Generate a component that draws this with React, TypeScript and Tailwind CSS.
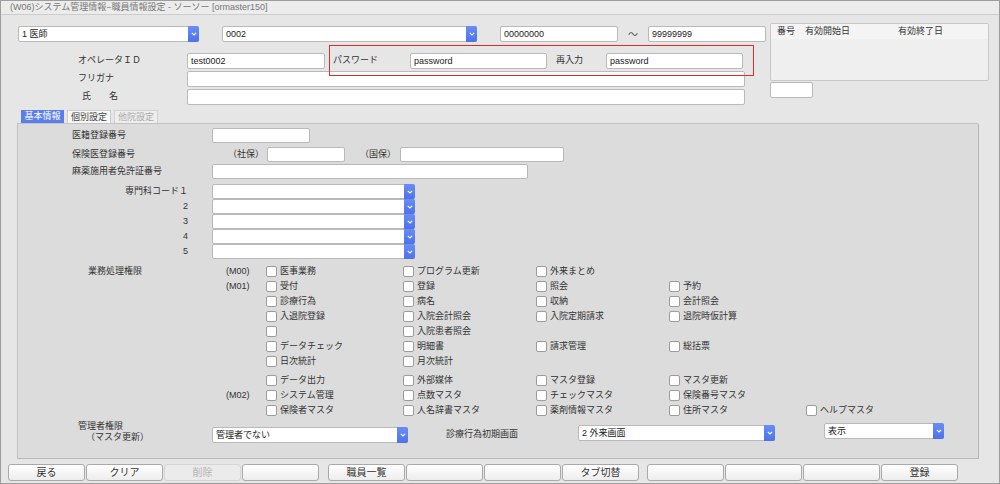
import React from 'react';

// 職員情報設定 screen (ORCA style form)

const Chevron = () => (
  <svg width="6" height="4" viewBox="0 0 6 4" fill="none">
    <path d="M0.8 0.8 L3 3 L5.2 0.8" stroke="white" strokeWidth="1.1" />
  </svg>
);

function Input({ w, value = '', h = 'h-[16px]' }: { w: string; value?: string; h?: string }) {
  return (
    <div className={`${w} ${h} shrink-0 bg-white border border-[#b9b9b9] rounded-[2px] pl-[3px] text-[9px] leading-[14px] text-[#222] overflow-hidden whitespace-nowrap`}>
      {value}
    </div>
  );
}

function Select({ w, value = '', h = 'h-[16px]' }: { w: string; value?: string; h?: string }) {
  return (
    <div className={`${w} ${h} shrink-0 flex bg-white border border-[#b9b9b9] rounded-[2px]`}>
      <div className="flex-1 pl-[3px] text-[9px] leading-[14px] text-[#222] whitespace-nowrap overflow-hidden">{value}</div>
      <div className="w-[11px] -my-[1px] -mr-[1px] bg-gradient-to-b from-[#6a8cf5] to-[#4d72ea] rounded-r-[2px] flex items-center justify-center">
        <Chevron />
      </div>
    </div>
  );
}

function Check({ label }: { label: string }) {
  return (
    <div className="flex items-center">
      <div className="w-[11px] h-[11px] bg-white border border-[#9c9c9c] rounded-[2px]" />
      <span className="ml-[3px] text-[9px] text-[#333] whitespace-nowrap">{label}</span>
    </div>
  );
}

type PermRow = { m?: string; title?: string; items: (string | null)[]; gapTop?: boolean };

const permRows: PermRow[] = [
  { m: '(M00)', title: '業務処理権限', items: ['医事業務', 'プログラム更新', '外来まとめ'] },
  { m: '(M01)', items: ['受付', '登録', '照会', '予約'] },
  { items: ['診療行為', '病名', '収納', '会計照会'] },
  { items: ['入退院登録', '入院会計照会', '入院定期請求', '退院時仮計算'] },
  { items: ['', '入院患者照会'] },
  { items: ['データチェック', '明細書', '請求管理', '総括票'] },
  { items: ['日次統計', '月次統計'] },
  { items: ['データ出力', '外部媒体', 'マスタ登録', 'マスタ更新'], gapTop: true },
  { m: '(M02)', items: ['システム管理', '点数マスタ', 'チェックマスタ', '保険番号マスタ'] },
  { items: ['保険者マスタ', '人名辞書マスタ', '薬剤情報マスタ', '住所マスタ', 'ヘルプマスタ'] },
];

const colWidths = ['w-[137px]', 'w-[133px]', 'w-[133px]', 'w-[137px]', 'w-[120px]'];

const buttonGroups = [
  ['戻る', 'クリア', '削除', ''],
  ['職員一覧', '', '', 'タブ切替'],
  ['', '', '', '登録'],
];

export default function App() {
  return (
    <div className="relative w-[1000px] h-[484px] bg-[#e6e6e6] border border-[#9d9d9d] font-['Liberation_Sans','Noto_Sans_CJK_JP',sans-serif] text-[#333] overflow-hidden flex flex-col">
      {/* title bar */}
      <div className="h-[14px] shrink-0 bg-[#ececec] border-b border-[#cdcdcd] pl-[9px] text-[9px] leading-[13px] text-[#777]">
        (W06)システム管理情報−職員情報設定 - ソーソー [ormaster150]
      </div>

      {/* header area */}
      <div className="flex">
        <div className="w-[766px] shrink-0">
          <div className="mt-[11px] flex items-center">
            <div className="ml-[17px]"><Select w="w-[181px]" value="1 医師" /></div>
            <div className="ml-[23px]"><Select w="w-[255px]" value="0002" /></div>
            <div className="ml-[23px]"><Input w="w-[118px]" value="00000000" /></div>
            <div className="w-[30px] text-center text-[10px] text-[#555]">〜</div>
            <Input w="w-[118px]" value="99999999" />
          </div>
          <div className="mt-[11px] flex items-center">
            <div className="ml-[77px] w-[109px] text-[9px]">オペレータＩＤ</div>
            <Input w="w-[138px]" value="test0002" />
            <div className="ml-[8px] w-[77px] text-[9px]">パスワード</div>
            <Input w="w-[137px]" value="password" />
            <div className="ml-[9px] w-[50px] text-[9px]">再入力</div>
            <Input w="w-[137px]" value="password" />
          </div>
          <div className="mt-[2px] flex items-center">
            <div className="ml-[77px] w-[109px] text-[9px]">フリガナ</div>
            <Input w="w-[558px]" />
          </div>
          <div className="mt-[2px] flex items-center">
            <div className="ml-[81px] w-[105px] text-[9px]">氏　　名</div>
            <Input w="w-[558px]" />
          </div>
        </div>
        <div className="ml-[3px]">
          <div className="mt-[8px] w-[219px] h-[58px] bg-[#efefef] border border-[#c8c8c8] rounded-[2px]">
            <div className="flex h-[15px] items-center text-[9px] bg-[#f4f4f4]">
              <div className="w-[34px] pl-[6px]">番号</div>
              <div className="w-[48px]">有効開始日</div>
              <div className="flex-1 text-center">有効終了日</div>
            </div>
          </div>
          <div className="mt-[1px]"><Input w="w-[43px]" /></div>
        </div>
      </div>

      {/* tabs */}
      <div className="mt-[5px] ml-[20px] flex gap-[3px] h-[13px]">
        <div className="w-[43px] bg-[#5a7fe8] text-white text-[9px] leading-[13px] text-center">基本情報</div>
        <div className="w-[44px] bg-[#f7f7f7] border border-b-0 border-[#cccccc] text-[9px] leading-[12px] text-center text-[#444]">個別設定</div>
        <div className="w-[44px] bg-[#eeeeee] border border-b-0 border-[#d2d2d2] text-[9px] leading-[12px] text-center text-[#aaaaaa]">他院設定</div>
      </div>

      {/* main panel */}
      <div className="ml-[16px] w-[962px] h-[336px] shrink-0 bg-[#dcdcdc] border border-[#c2c2c2] border-r-[#b5b5b5] border-b-[#b9b9b9] rounded-tr-[2px]">
        <div className="mt-[4px] flex items-center">
          <div className="ml-[54px] w-[140px] text-[9px]">医籍登録番号</div>
          <Input w="w-[98px]" h="h-[15px]" />
        </div>
        <div className="mt-[4px] flex items-center">
          <div className="ml-[54px] w-[156px] text-[9px]">保険医登録番号</div>
          <div className="w-[39px] text-[9px]">（社保）</div>
          <Input w="w-[78px]" h="h-[15px]" />
          <div className="ml-[15px] w-[40px] text-[9px]">（国保）</div>
          <Input w="w-[164px]" h="h-[15px]" />
        </div>
        <div className="mt-[2px] flex items-center">
          <div className="ml-[54px] w-[140px] text-[9px]">麻薬施用者免許証番号</div>
          <Input w="w-[316px]" h="h-[15px]" />
        </div>
        <div className="mt-[5px] flex">
          <div className="ml-[54px] w-[140px] pr-[24px] text-[9px] text-right">
            {['専門科コード１', '2', '3', '4', '5'].map((t) => (
              <div key={t} className="h-[15px] leading-[15px]">{t}</div>
            ))}
          </div>
          <div className="flex flex-col">
            {[1, 2, 3, 4, 5].map((n) => (
              <Select key={n} w="w-[203px]" h="h-[15px]" />
            ))}
          </div>
        </div>

        {/* permissions */}
        <div className="mt-[5px]">
          {permRows.map((r, i) => (
            <div key={i} className={`flex h-[15px] items-center ${r.gapTop ? 'mt-[4px]' : ''}`}>
              <div className="w-[208px] pl-[70px] text-[9px]">{r.title ?? ''}</div>
              <div className="w-[40px] text-[9px]">{r.m ?? ''}</div>
              {r.items.map((it, j) => (
                <div key={j} className={colWidths[j]}>
                  {it !== null && <Check label={it} />}
                </div>
              ))}
            </div>
          ))}
        </div>

        {/* bottom settings */}
        <div className="mt-[2px] flex items-start">
          <div className="ml-[60px] w-[134px] text-[9px] leading-[11px] pt-[1px]">
            <div>管理者権限</div>
            <div className="pl-[8px]">（マスタ更新）</div>
          </div>
          <div className="mt-[7px]"><Select w="w-[196px]" value="管理者でない" /></div>
          <div className="ml-[38px] w-[132px] mt-[8px] text-[9px]">診療行為初期画面</div>
          <div className="mt-[5px]"><Select w="w-[197px]" value="2 外来画面" /></div>
          <div className="ml-[49px] mt-[3px]"><Select w="w-[120px]" value="表示" /></div>
        </div>
      </div>

      {/* function buttons */}
      <div className="mt-[5px] ml-[7px] flex">
        {buttonGroups.map((g, gi) => (
          <div key={gi} className={`flex gap-[1px] ${gi === 1 ? 'ml-[9px]' : gi === 2 ? 'ml-[8px]' : ''}`}>
            {g.map((b, bi) => {
              const disabled = b === '削除';
              return (
                <div
                  key={bi}
                  className={`w-[77px] h-[17px] rounded-[3px] text-[10px] leading-[15px] text-center border ${
                    disabled
                      ? 'bg-[#ebebeb] border-[#d6d6d6] text-[#b4b4b4]'
                      : 'bg-gradient-to-b from-[#ffffff] to-[#ededed] border-[#a9a9a9] text-[#333]'
                  }`}
                >
                  {b}
                </div>
              );
            })}
          </div>
        ))}
      </div>

      {/* highlight frame around password fields */}
      <div className="absolute left-[328px] top-[44px] w-[425px] h-[31px] ring-1 ring-inset ring-[#e22a2a] pointer-events-none" />
    </div>
  );
}
